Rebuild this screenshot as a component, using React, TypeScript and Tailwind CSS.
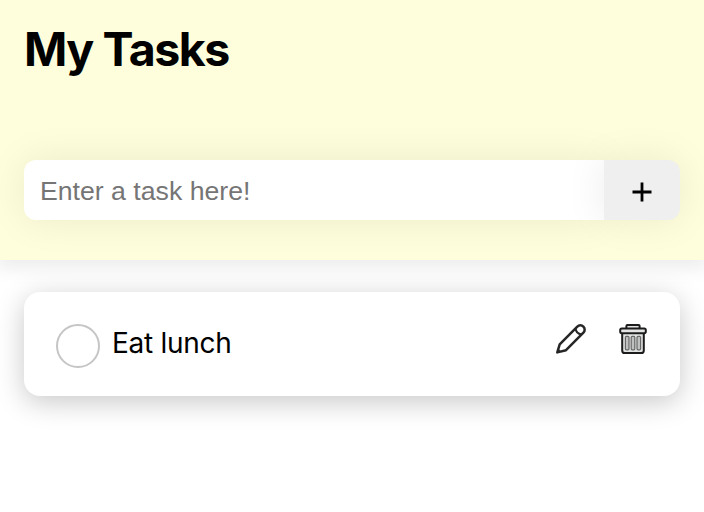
function PencilIcon() {
  return (
    <svg width="32" height="32" viewBox="0 0 32 32" fill="none" stroke="#262626" strokeWidth="2.5" strokeLinejoin="round">
      <path d="M2.3 29.4L4.7 21.4L22.3 3.6A4.3 4.3 0 0 1 28.4 9.7L11 27.2Z" />
      <path d="M20.6 5.4C20.8 8.6 23 11 26.6 11.4" strokeWidth="2" />
      <path d="M2.3 29.4L3.2 26L5.6 28.4Z" fill="#262626" strokeWidth="1" />
    </svg>
  );
}

function TrashIcon() {
  return (
    <svg width="32" height="32" viewBox="0 0 32 32" stroke="#1c1c1c" strokeWidth="2" strokeLinejoin="round">
      <path d="M5.2 9V27.4Q5.2 30 7.8 30H24.2Q26.8 30 26.8 27.4V9Z" fill="#e2e4e3" />
      <path d="M9.4 5.6V3Q9.4 2.1 10.4 2.1H21.6Q22.6 2.1 22.6 3V5.6" fill="#e2e4e3" />
      <rect x="3.2" y="5.4" width="25.6" height="4.8" rx="1.6" fill="#e2e4e3" />
      <g fill="#bfc1c0" stroke="#686868" strokeWidth="1.2">
        <rect x="8.4" y="13.4" width="3.6" height="13.4" rx="1" />
        <rect x="14.2" y="13.4" width="3.6" height="13.4" rx="1" />
        <rect x="20" y="13.4" width="3.6" height="13.4" rx="1" />
      </g>
    </svg>
  );
}

export default function App() {
  return (
    <div className="h-[512px] w-[704px] overflow-hidden bg-white font-['Inter',sans-serif] text-black">
      <header className="h-[260px] bg-[#fefedc] px-6 pt-5 shadow-[0_4px_18px_4px_rgba(0,0,0,0.08)]">
        <h1 className="h-[140px] text-[46.5px] leading-[58px] font-[670] tracking-[-0.031em]">My Tasks</h1>
        <form className="flex h-[60px]" onSubmit={(e) => e.preventDefault()}>
          <input
            className="w-[580px] rounded-l-xl bg-white px-4 pt-1 font-['Liberation_Sans',sans-serif] text-[26.67px] shadow-[0_0_40px_rgba(0,0,0,0.08)] outline-none placeholder:text-[#757575]"
            placeholder="Enter a task here!"
          />
          <button className="flex w-[76px] items-center justify-center rounded-r-xl bg-[#efefef] shadow-[0_0_40px_rgba(0,0,0,0.08)]" aria-label="Add task">
            <svg className="mt-[3px]" width="20" height="20" viewBox="0 0 20 20" stroke="black" strokeWidth="2.8">
              <path d="M10 0.5V19.5M0.5 10H19.5" />
            </svg>
          </button>
        </form>
      </header>
      <main className="px-6 pt-8">
        <div className="flex h-[104px] items-start rounded-2xl bg-white px-8 pt-8 shadow-[0_6px_28px_rgba(0,0,0,0.22)]">
          <span className="size-11 rounded-full border-2 border-[#c5c5c5]" />
          <span className="ml-3 pt-px text-[28px] leading-9 tracking-[-0.01em]">Eat lunch</span>
          <div className="-mt-px -mr-px ml-auto flex gap-[30px]">
            <button aria-label="Edit task"><PencilIcon /></button>
            <button aria-label="Delete task"><TrashIcon /></button>
          </div>
        </div>
      </main>
    </div>
  );
}
